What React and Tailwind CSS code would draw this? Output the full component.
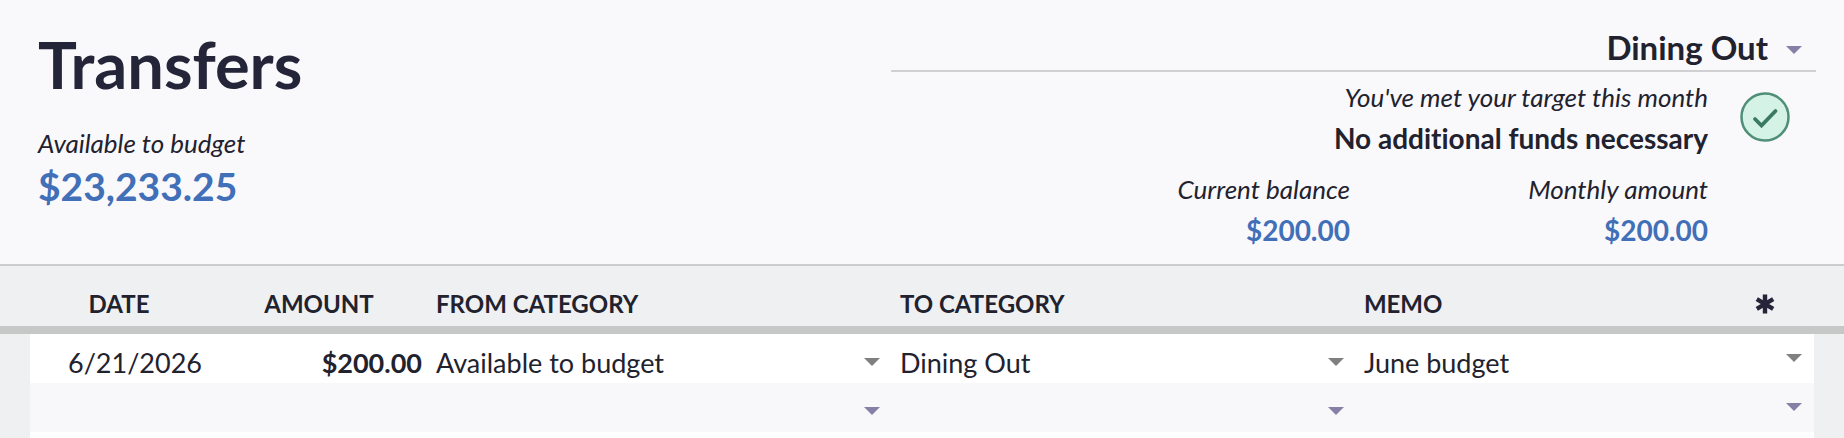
import React, { useState } from "react";

const categories = ["Available to budget", "Dining Out", "Groceries", "Rent", "Savings"];
const statuses = ["", "✓", "✱"];

const initialRows = [
  { id: 1, date: "6/21/2026", amount: "$200.00", from: "Available to budget", to: "Dining Out", memo: "June budget", status: "" },
  { id: 2, date: "", amount: "", from: "", to: "", memo: "", status: "" },
];

const Caret = ({ className }) => (
  <svg
    viewBox="0 0 16 8"
    className={`pointer-events-none absolute h-2 w-4 fill-current ${className}`}
    aria-hidden="true"
  >
    <path d="M0 0h16L8 8z" />
  </svg>
);

const CheckCircle = () => (
  <svg viewBox="0 0 50 50" className="h-[50px] w-[50px]" role="img" aria-label="Target met">
    <circle cx="25" cy="25" r="23.5" fill="#d5f2e6" stroke="#4f8f77" strokeWidth="2.5" />
    <path
      d="M15 27l6.5 6.5L35.5 19"
      fill="none"
      stroke="#3b7a62"
      strokeWidth="3.8"
      strokeLinecap="round"
    />
  </svg>
);

// Small label with an amount under it
const Stat = ({ label, value }) => (
  <div className="text-right">
    <dt className="text-[26px] leading-[42px] italic">{label}</dt>
    <dd className="text-[28px] leading-[40px] font-bold text-[#416fb8]">{value}</dd>
  </div>
);

const CellSelect = ({ label, value, options, onChange, caret }) => (
  <div className="relative h-full">
    <select
      aria-label={label}
      value={value}
      onChange={onChange}
      className="h-full w-full appearance-none bg-transparent pt-2 pr-9 pl-1.5 outline-none"
    >
      {!options.includes("") && <option value=""></option>}
      {options.map((option) => (
        <option key={option} value={option}>
          {option}
        </option>
      ))}
    </select>
    <Caret className={caret} />
  </div>
);

const App = () => {
  const [category, setCategory] = useState("Dining Out");
  const [rows, setRows] = useState(initialRows);

  const handleChange = (id, field) => (e) => {
    const { value } = e.target;
    setRows((prev) => prev.map((row) => (row.id === id ? { ...row, [field]: value } : row)));
  };

  return (
    <main className="min-h-screen bg-[#eef0f2] font-['Lato','Open_Sans',sans-serif] text-[#22222e] [font-variant-ligatures:none]">
      <header className="flex justify-between border-b-2 border-[#cccccf] bg-[#f9f9fc] pr-7 pb-3.5 pl-[38px]">
        <div className="pt-7">
          <h1 className="text-[65px] leading-[72px] font-bold text-[#25253a]">Transfers</h1>
          <p className="mt-[27px] text-[26px] leading-8 italic">Available to budget</p>
          <p className="mt-1 text-[39px] leading-[46px] font-bold text-[#416fb8]">$23,233.25</p>
        </div>

        <div className="w-[52%] pt-6">
          <div className="relative border-b-2 border-[#d0d0d3]">
            <select
              aria-label="Category"
              value={category}
              onChange={(e) => setCategory(e.target.value)}
              className="h-[46px] w-full appearance-none bg-transparent pr-12 text-right text-[33px] leading-[46px] font-bold outline-none [text-align-last:right]"
            >
              {categories.map((name) => (
                <option key={name}>{name}</option>
              ))}
            </select>
            <Caret className="top-[22px] right-3.5 text-[#8580a5]" />
          </div>

          <div className="flex items-start justify-end gap-8 pr-[26px]">
            <div className="flex-1 pt-1 text-right">
              <p className="text-[26px] leading-[42px] italic">You've met your target this month</p>
              <p className="text-[28px] leading-[40px] font-bold">No additional funds necessary</p>
              <dl className="mt-2.5 grid grid-cols-[1fr_358px]">
                <Stat label="Current balance" value="$200.00" />
                <Stat label="Monthly amount" value="$200.00" />
              </dl>
            </div>
            <div className="pt-5">
              <CheckCircle />
            </div>
          </div>
        </div>
      </header>

      <table className="w-full table-fixed border-separate border-spacing-0">
        <colgroup>
          <col className="w-[30px]" />
          <col className="w-[178px]" />
          <col className="w-[222px]" />
          <col className="w-[25.16%]" />
          <col className="w-[25.16%]" />
          <col />
          <col className="w-[98px]" />
          <col className="w-[30px]" />
        </colgroup>
        <thead>
          <tr className="h-[68px] text-left text-[24px] leading-8 font-bold whitespace-nowrap [&>*]:border-b-8 [&>*]:border-[#c6c8c8]">
            <td></td>
            <th className="pt-4 text-center">DATE</th>
            <th className="pt-4 text-center">AMOUNT</th>
            <th className="pt-4 pl-1.5">FROM CATEGORY</th>
            <th className="pt-4 pl-1.5">TO CATEGORY</th>
            <th className="pt-4 pl-1.5">MEMO</th>
            <th className="pt-4">
              <svg viewBox="0 0 20 20" className="mx-auto h-5 w-5" role="img" aria-label="Status">
                <path
                  d="M10 .5v19M1.8 5.2l16.4 9.6M18.2 5.2L1.8 14.8"
                  stroke="#25253a"
                  strokeWidth="4.4"
                />
              </svg>
            </th>
            <td></td>
          </tr>
        </thead>
        <tbody>
          {rows.map((row) => {
            const color = row.date ? "text-[#808080]" : "text-[#8580a5]";
            const cell = row.date ? "h-[49px] bg-white" : "h-[49px] bg-[#f8f8fb]";
            return (
              <tr key={row.id} className="text-[27px] leading-8">
                <td></td>
                <td className={cell}>
                  <input
                    type="text"
                    aria-label="Date"
                    value={row.date}
                    onChange={handleChange(row.id, "date")}
                    className="h-full w-full bg-transparent pt-2 pr-1.5 text-right outline-none"
                  />
                </td>
                <td className={cell}>
                  <input
                    type="text"
                    aria-label="Amount"
                    value={row.amount}
                    onChange={handleChange(row.id, "amount")}
                    className="h-full w-full bg-transparent pt-2 pr-2 text-right font-bold outline-none"
                  />
                </td>
                <td className={cell}>
                  <CellSelect
                    label="From category"
                    value={row.from}
                    options={categories}
                    onChange={handleChange(row.id, "from")}
                    caret={`top-6 right-3.5 ${color}`}
                  />
                </td>
                <td className={cell}>
                  <CellSelect
                    label="To category"
                    value={row.to}
                    options={categories}
                    onChange={handleChange(row.id, "to")}
                    caret={`top-6 right-3.5 ${color}`}
                  />
                </td>
                <td className={cell}>
                  <input
                    type="text"
                    aria-label="Memo"
                    value={row.memo}
                    onChange={handleChange(row.id, "memo")}
                    className="h-full w-full bg-transparent pt-2 pl-1.5 outline-none"
                  />
                </td>
                <td className={cell}>
                  <CellSelect
                    label="Status"
                    value={row.status}
                    options={statuses}
                    onChange={handleChange(row.id, "status")}
                    caret={`top-5 right-3 ${color}`}
                  />
                </td>
                <td></td>
              </tr>
            );
          })}
          <tr>
            <td></td>
            <td colSpan={6} className="h-1.5 bg-white"></td>
            <td></td>
          </tr>
        </tbody>
      </table>
    </main>
  );
};

export default App;
